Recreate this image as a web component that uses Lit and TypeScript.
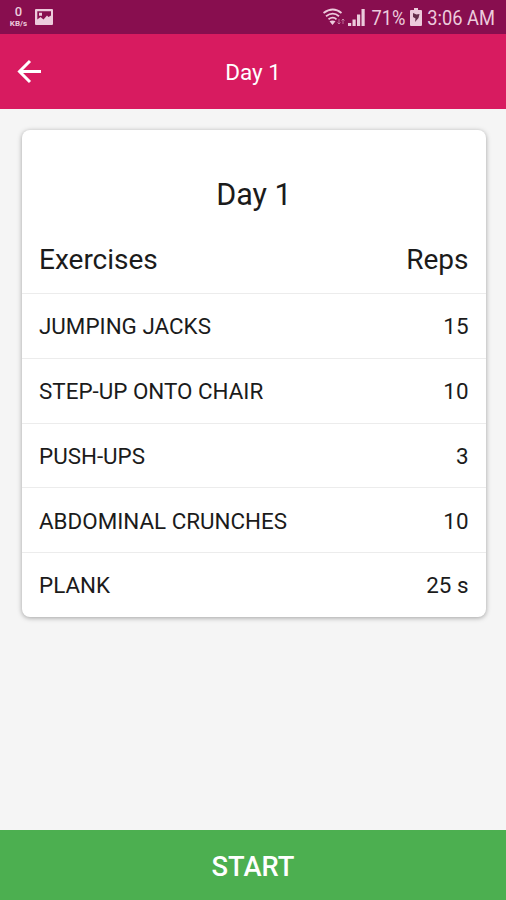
import { LitElement, html, css } from "lit";
import { customElement } from "lit/decorators.js";

const EXERCISES = [
  { name: "JUMPING JACKS", reps: "15" },
  { name: "STEP-UP ONTO CHAIR", reps: "10" },
  { name: "PUSH-UPS", reps: "3" },
  { name: "ABDOMINAL CRUNCHES", reps: "10" },
  { name: "PLANK", reps: "25 s" },
];

@customElement("app-root")
export class AppRoot extends LitElement {
  static styles = css`
    :host { display: flex; flex-direction: column; height: 900px; box-sizing: border-box; background: #f5f5f5; font-family: Roboto, "Liberation Sans", sans-serif; color: #1b1b1b; overflow: hidden; }
    .status { height: 34px; flex: none; background: #880e4f; display: flex; align-items: center; padding: 0 11px 0 8px; color: #eccbdc; box-sizing: border-box; font-size: 18.300px; }
    .speed { display: flex; flex-direction: column; align-items: center; width: 21px; font-size: 13px; line-height: 14px; font-weight: 500; }
    .unit { font-size: 8px; line-height: 10px; font-weight: 700; }
    .pic { margin-left: 6px; }
    .grow { flex: 1; }
    .tall { transform: scaleY(1.1); line-height: 22px; padding-top: 1px; }
    .wifi { margin-right: 3px; }
    .signal { margin-right: 6px; }
    .battery { margin: 0 5px 0 5px; }
    .bar { height: 74.500px; flex: none; background: #d81b60; display: grid; grid-template-columns: 60px 1fr 60px; align-items: center; color: #fff; }
    .back { margin-left: 17px; display: block; }
    .title { text-align: center; font-size: 22.500px; padding-top: 2px; }
    .main { flex: 1; padding: 21.500px 20px 0 22px; }
    .card { background: #fff; border-radius: 8px; box-shadow: 0 1px 5px rgba(0,0,0,.35); height: 486.500px; }
    .head { font-size: 30.500px; line-height: 36px; text-align: center; padding-top: 47px; }
    .row { display: flex; justify-content: space-between; align-items: center; height: 64.800px; box-sizing: border-box; padding: 0.500px 17.500px 0 17px; font-size: 22.400px; border-top: 1px solid #ececec; }
    .cols { font-size: 28px; border: 0; height: 80px; padding-top: 13px; }
    .start { height: 70px; flex: none; background: #4caf50; color: #fff; display: flex; align-items: center; justify-content: center; font-size: 27.300px; font-weight: 500; padding-top: 3px; box-sizing: border-box; }
  `;
  render() {
    return html`
      <div class="status">
        <div class="speed"><span>0</span><span class="unit">KB/s</span></div>
        <svg class="pic" width="18" height="16" viewBox="0 0 18 16"><path fill="currentColor" fill-rule="evenodd" d="M1 0h16a1 1 0 0 1 1 1v14a1 1 0 0 1-1 1H1a1 1 0 0 1-1-1V1a1 1 0 0 1 1-1zM2.300 2.300V10.500l3.200-2.500 3 2.500 3.500-4 1.500 1.500L16 6.500V2.300zM4 3.800h3v3H4z"/></svg>
        <div class="grow"></div>
        <svg class="wifi" width="22" height="18" viewBox="0 0 22 18" fill="none" stroke="currentColor" stroke-width="1.800"><path d="M0.500 5Q10 -2 18.500 5M3 8.200Q10 3 16 8.200M5.500 11.300Q10 8 13.500 11.300"/><path d="M6.500 13.200Q9.500 12 12.500 13.200L9.500 17z" fill="currentColor" stroke="none"/><path d="M16 11v5M14.500 14.500L16 16l1.500-1.500M20 16v-5M18.500 12.500L20 11l1.500 1.500" stroke-width="1" opacity=".5"/></svg>
        <svg class="signal" width="17" height="17" viewBox="0 0 17 17" fill="currentColor"><path d="M0 14h3.200v3H0zM4.500 10.500h3.200V17H4.500zM9 5.500h3.200V17H9z"/><path d="M13.500 0h3.200v17h-3.200z"/></svg>
        <span class="tall">71%</span>
        <svg class="battery" width="12" height="18" viewBox="0 0 12 18"><path fill="currentColor" d="M4 0h4v2h3a1 1 0 0 1 1 1v14a1 1 0 0 1-1 1H1a1 1 0 0 1-1-1V3a1 1 0 0 1 1-1h3z"/><path fill="#65304c" d="M3 5l3.500 1.500L9.500 6 8.500 10 5 14l.5-3.500L3 9z"/></svg>
        <span class="tall">3:06 AM</span>
      </div>
      <div class="bar">
        <svg class="back" width="25" height="25" viewBox="0 0 25 25" fill="none" stroke="#fff" stroke-width="3"><path d="M24 12.500H3M13 2L2.500 12.500 13 23"/></svg>
        <div class="title">Day 1</div>
      </div>
      <div class="main"><div class="card">
        <div class="head">Day 1</div>
        <div class="row cols"><span>Exercises</span><span>Reps</span></div>
        ${EXERCISES.map((e) => html`<div class="row"><span>${e.name}</span><span>${e.reps}</span></div>`)}
      </div></div>
      <div class="start">START</div>`;
  }
}
